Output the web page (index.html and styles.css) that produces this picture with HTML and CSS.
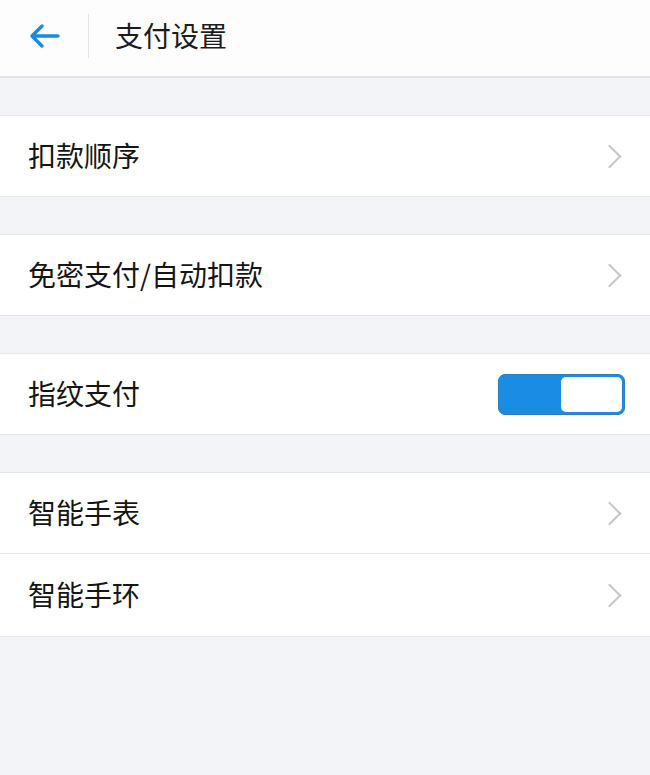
FILE: index.html
```html
<!DOCTYPE html>
<html lang="zh-CN">
    <head>
        <meta charset="UTF-8" />
        <meta name="viewport" content="width=device-width, initial-scale=1.0" />
        <link rel="stylesheet" href="styles.css">
        <title>支付设置</title>
    </head>
    <body>
        <header class="topbar">
            <button class="back" type="button">
                <svg width="32" height="26" viewBox="0 0 32 26">
                    <path d="M30 13H4M14 3L4 13l10 10" fill="none" stroke="#1a8ae0" stroke-width="3.4" stroke-linecap="round" stroke-linejoin="round" />
                </svg>
            </button>
            <span class="sep"></span>
            <h1 class="title">支付设置</h1>
        </header>

        <div class="group">
            <div class="row">
                <span class="label">扣款顺序</span>
                <span class="chevron"></span>
            </div>
        </div>

        <div class="group">
            <div class="row">
                <span class="label">免密支付/自动扣款</span>
                <span class="chevron"></span>
            </div>
        </div>

        <div class="group">
            <div class="row">
                <span class="label">指纹支付</span>
                <span class="switch on"><span class="knob"></span></span>
            </div>
        </div>

        <div class="group">
            <div class="row">
                <span class="label">智能手表</span>
                <span class="chevron"></span>
            </div>
            <div class="row">
                <span class="label">智能手环</span>
                <span class="chevron"></span>
            </div>
        </div>
    </body>
</html>
```

FILE: styles.css
```css
* {
    margin: 0;
    padding: 0;
    box-sizing: border-box;
    font-family: "Noto Sans CJK SC", "Noto Sans", sans-serif;
}

body {
    background-color: #f3f4f7;
    min-height: 775px;
}

.topbar {
    height: 78px;
    display: flex;
    align-items: center;
    background-color: #fdfdfd;
    border-bottom: 2px solid #e3e4e6;
}

.back {
    width: 88px;
    height: 76px;
    display: flex;
    align-items: center;
    justify-content: flex-start;
    padding-left: 28px;
    padding-bottom: 4px;
    border: none;
    background: none;
}

.sep {
    width: 1px;
    height: 44px;
    margin-bottom: 4px;
    background-color: #e3e3e3;
}

.title {
    margin-left: 26px;
    font-size: 28px;
    font-weight: 400;
    color: #1c1c1c;
    margin-bottom: 6px;
}

.group {
    margin-top: 37px;
    background-color: #ffffff;
    border-top: 1px solid #e6e7e9;
    border-bottom: 1px solid #e6e7e9;
}

.row {
    height: 80px;
    display: flex;
    align-items: center;
    justify-content: space-between;
    padding: 0 25px 0 28px;
}

.row + .row {
    border-top: 1px solid #e9e9eb;
    height: 83px;
}

.label {
    font-size: 28px;
    color: #151515;
    padding-bottom: 2px;
}

.chevron {
    width: 17px;
    height: 17px;
    margin-right: 7px;
    border-top: 2px solid #c6c6c8;
    border-right: 2px solid #c6c6c8;
    transform: rotate(45deg);
}

.switch {
    width: 127px;
    height: 41px;
    display: flex;
    justify-content: flex-end;
    padding: 2px;
    border-radius: 7px;
    background-color: #1a8ce3;
    border: 1px solid #2a7fbf;
}

.knob {
    width: 61px;
    height: 100%;
    background-color: #ffffff;
    border-radius: 5px;
}
```
